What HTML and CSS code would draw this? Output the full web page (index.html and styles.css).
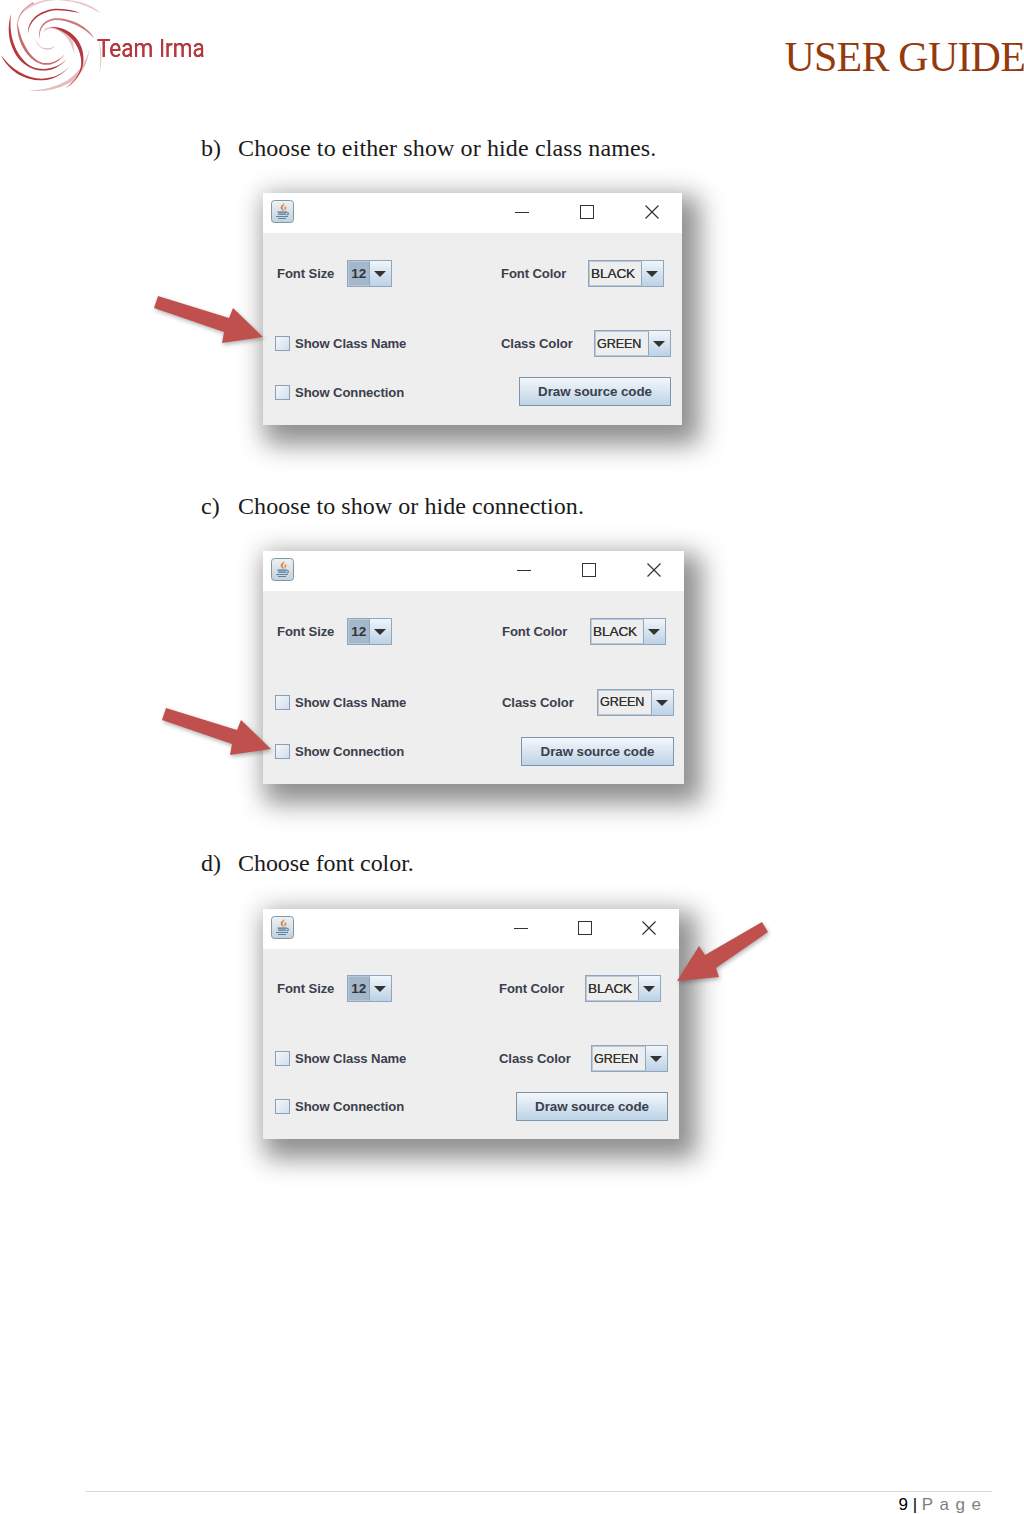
FILE: index.html
```html
<!DOCTYPE html>
<html lang="en">
<head>
<meta charset="utf-8">
<title>User Guide</title>
<link rel="stylesheet" href="styles.css">
</head>
<body>
<svg class="defs" width="0" height="0" aria-hidden="true">
  <defs>
    <linearGradient id="javabg" x1="0" y1="0" x2="0" y2="1"><stop offset="0" stop-color="#eef2f6"/><stop offset="1" stop-color="#c3d0db"/></linearGradient>
  </defs>
  <symbol id="java" viewBox="0 0 23 23">
    <rect x="0.500" y="0.500" width="22" height="22" rx="3" fill="url(#javabg)" stroke="#83979f"/>
    <path d="M12.800 3c1.600 2.300-2.300 3.400-1 5.800.4.900 1 1.300.8 2.200-2-1-3.800-2.800-2.400-5 .8-1.200 2.500-1.300 2.600-3z" fill="#e27a2c"/>
    <path d="M15 6c-1.500.8-2.300 1.700-1.500 3.300.2.500.2 1 0 1.500 1.500-1 2.500-3 1.500-4.800z" fill="#e98f4a"/>
    <path d="M6.500 12.200h9.500M7 14.200h8" fill="none" stroke="#4f7799" stroke-width="1.300"/>
    <path d="M16 12.500c2 0 2 2.200-.6 2.500M5 16.500h12M7 18.500h8" fill="none" stroke="#5d83a6" stroke-width="1.200"/>
  </symbol>
</svg>
<div class="page">
  <header class="top">
    <div class="brand">
      <svg class="swirl" viewBox="0 0 320 300" width="107" height="100" aria-hidden="true">
        <defs><filter id="soft"><feGaussianBlur stdDeviation="1"/></filter></defs>
        <g filter="url(#soft)" fill="#b5383c">
          <path d="M150 84C205 80 254 125 250 185 247 222 225 250 196 268 226 242 246 220 243 182 236 128 198 94 150 84z"/>
          <path d="M84 104C80 60 125 28 175 29 200 30 222 34 240 42 215 38 190 34 168 34 122 38 87 65 84 104z"/>
          <path d="M33 45C11 110 40 190 100 210 130 220 170 216 200 180 170 210 130 215 100 205 54 186 22 115 33 45z"/>
          <path d="M52 70C46 120 80 188 130 197 155 200 175 190 195 165 172 188 152 194 128 192 90 182 60 125 52 70z" opacity=".75"/>
          <path d="M120 122C110 95 124 66 155 59 200 52 262 78 282 118 252 85 205 63 165 63 134 66 114 90 120 122z" opacity=".65"/>
          <path d="M130 100C130 88 145 80 170 84 205 88 225 125 222 165 214 130 195 102 165 90 150 86 137 90 130 100z" opacity=".3"/>
          <path d="M2 168C25 215 70 246 130 244 165 242 195 222 218 190 192 226 160 238 125 239 80 239 35 212 2 168z"/>
          <path d="M78 272C115 278 160 266 200 245 235 222 258 190 268 150 262 198 240 238 200 256 160 276 115 280 78 272z" opacity=".35"/>
          <path d="M55 55C70 22 115 0 170 0 225 2 275 15 300 42 260 18 220 5 170 3 120 5 78 25 55 55z" opacity=".3"/>
          <path d="M100 14C75 22 55 50 50 85 49 60 62 28 100 8z" opacity=".5"/>
          <path d="M295 120C308 160 304 195 298 225 302 190 301 155 295 120z" opacity=".3"/>
          <path d="M125 145C140 150 155 148 165 140 155 154 135 156 125 145z" opacity=".35"/>
          <path d="M105 120C110 135 125 145 135 150 120 149 106 135 105 120z" opacity=".25"/>
        </g>
      </svg>
      <span class="brand-name">Team Irma</span>
    </div>
    <h1 class="doc-title">USER GUIDE</h1>
  </header>

  <main class="steps">
    <section class="step step-b">
      <h2 class="step-title"><span class="step-mark">b)</span>Choose to either show or hide class names.</h2>
      <div class="window win-b">
        <div class="titlebar">
          <svg class="java" width="23" height="23" aria-hidden="true"><use href="#java"/></svg>
          <div class="controls">
            <svg width="14" height="14" viewBox="0 0 14 14" aria-hidden="true"><path d="M0 7.500h14" stroke="#333" fill="none"/></svg>
            <svg width="14" height="14" viewBox="0 0 14 14" aria-hidden="true"><rect x=".5" y=".5" width="13" height="13" stroke="#333" fill="none"/></svg>
            <svg width="14" height="14" viewBox="0 0 14 14" aria-hidden="true"><path d="M.5.500l13 13M13.500.500l-13 13" stroke="#333" stroke-width="1.200" fill="none"/></svg>
          </div>
        </div>
        <div class="body">
          <div class="row row-one">
            <div class="left pad"><span class="label">Font Size</span><div class="combo combo-size"><span class="field selected">12</span><span class="drop"></span></div></div>
            <div class="right"><span class="label">Font Color</span><div class="combo combo-font"><span class="field">BLACK</span><span class="drop"></span></div></div>
          </div>
          <div class="row row-two">
            <div class="left"><span class="check"></span><span class="label">Show Class Name</span></div>
            <div class="right"><span class="label">Class Color</span><div class="combo combo-class"><span class="field">GREEN</span><span class="drop"></span></div></div>
          </div>
          <div class="row row-three">
            <div class="left"><span class="check"></span><span class="label">Show Connection</span></div>
            <div class="right end"><div class="button">Draw source code</div></div>
          </div>
        </div>
      </div>
    </section>

    <section class="step step-c">
      <h2 class="step-title"><span class="step-mark">c)</span>Choose to show or hide connection.</h2>
      <div class="window win-c">
        <div class="titlebar">
          <svg class="java" width="23" height="23" aria-hidden="true"><use href="#java"/></svg>
          <div class="controls">
            <svg width="14" height="14" viewBox="0 0 14 14" aria-hidden="true"><path d="M0 7.500h14" stroke="#333" fill="none"/></svg>
            <svg width="14" height="14" viewBox="0 0 14 14" aria-hidden="true"><rect x=".5" y=".5" width="13" height="13" stroke="#333" fill="none"/></svg>
            <svg width="14" height="14" viewBox="0 0 14 14" aria-hidden="true"><path d="M.5.500l13 13M13.500.500l-13 13" stroke="#333" stroke-width="1.200" fill="none"/></svg>
          </div>
        </div>
        <div class="body">
          <div class="row row-one">
            <div class="left pad"><span class="label">Font Size</span><div class="combo combo-size"><span class="field selected">12</span><span class="drop"></span></div></div>
            <div class="right"><span class="label">Font Color</span><div class="combo combo-font"><span class="field">BLACK</span><span class="drop"></span></div></div>
          </div>
          <div class="row row-two">
            <div class="left"><span class="check"></span><span class="label">Show Class Name</span></div>
            <div class="right"><span class="label">Class Color</span><div class="combo combo-class"><span class="field">GREEN</span><span class="drop"></span></div></div>
          </div>
          <div class="row row-three">
            <div class="left"><span class="check"></span><span class="label">Show Connection</span></div>
            <div class="right end"><div class="button">Draw source code</div></div>
          </div>
        </div>
      </div>
    </section>

    <section class="step step-d">
      <h2 class="step-title"><span class="step-mark">d)</span>Choose font color.</h2>
      <div class="window win-d">
        <div class="titlebar">
          <svg class="java" width="23" height="23" aria-hidden="true"><use href="#java"/></svg>
          <div class="controls">
            <svg width="14" height="14" viewBox="0 0 14 14" aria-hidden="true"><path d="M0 7.500h14" stroke="#333" fill="none"/></svg>
            <svg width="14" height="14" viewBox="0 0 14 14" aria-hidden="true"><rect x=".5" y=".5" width="13" height="13" stroke="#333" fill="none"/></svg>
            <svg width="14" height="14" viewBox="0 0 14 14" aria-hidden="true"><path d="M.5.500l13 13M13.500.500l-13 13" stroke="#333" stroke-width="1.200" fill="none"/></svg>
          </div>
        </div>
        <div class="body">
          <div class="row row-one">
            <div class="left pad"><span class="label">Font Size</span><div class="combo combo-size"><span class="field selected">12</span><span class="drop"></span></div></div>
            <div class="right"><span class="label">Font Color</span><div class="combo combo-font"><span class="field">BLACK</span><span class="drop"></span></div></div>
          </div>
          <div class="row row-two">
            <div class="left"><span class="check"></span><span class="label">Show Class Name</span></div>
            <div class="right"><span class="label">Class Color</span><div class="combo combo-class"><span class="field">GREEN</span><span class="drop"></span></div></div>
          </div>
          <div class="row row-three">
            <div class="left"><span class="check"></span><span class="label">Show Connection</span></div>
            <div class="right end"><div class="button">Draw source code</div></div>
          </div>
        </div>
      </div>
    </section>
  </main>

  <footer class="foot">
    <div class="page-no">9 | <span class="page-word">P a g e</span></div>
  </footer>

  <svg class="arrow arrow-b" width="120" height="60" viewBox="0 0 120 60" aria-hidden="true">
    <polygon points="5,1 76,23 80,13 110,42 69,48 71,37 1,13"/>
  </svg>
  <svg class="arrow arrow-c" width="120" height="60" viewBox="0 0 120 60" aria-hidden="true">
    <polygon points="5,1 76,23 80,13 110,42 69,48 71,37 1,13"/>
  </svg>
  <svg class="arrow arrow-d" width="100" height="70" viewBox="0 0 100 70" aria-hidden="true">
    <polygon points="86,2 92,12 40,48 43,57 1,61 23,26 29,35"/>
  </svg>
</div>
</body>
</html>
```
FILE: styles.css
```css
* { box-sizing: border-box; }
html, body { margin: 0; padding: 0; background: #fff; }
.defs { position: absolute; }
.page {
  position: relative;
  width: 1024px;
  height: 1514px;
  overflow: hidden;
  display: flex;
  flex-direction: column;
  font-family: "Liberation Serif", serif;
  color: #111;
}

/* Header */
.top { display: flex; justify-content: space-between; align-items: flex-start; height: 133px; flex: none; }
.brand { display: flex; align-items: flex-start; }
.swirl { display: block; flex: none; margin-top: -1px; }
.brand-name {
  font-family: Roboto, sans-serif;
  font-size: 26.5px;
  line-height: 30px;
  color: #b5383c;
  margin: 33px 0 0 -10px;
  transform: scaleX(.85);
  transform-origin: left center;
  white-space: nowrap;
  text-shadow: 0 0 .5px #b5383c;
}
.doc-title {
  margin: 32px -1px 0 0;
  font-family: "Liberation Serif", serif;
  font-weight: 400;
  font-size: 42px;
  letter-spacing: -.8px;
  line-height: 50px;
  color: #943a0c;
  white-space: nowrap;
}

/* Steps */
.steps { display: flex; flex-direction: column; }
.step { padding-left: 201px; }
.step-c { margin-top: 66px; }
.step-d { margin-top: 64px; }
.step-title {
  margin: 0;
  display: flex;
  font-weight: 400;
  font-size: 24px;
  letter-spacing: .12px;
  line-height: 30px;
  color: #1a1a1a;
}
.step-c .step-title { letter-spacing: .06px; }
.step-d .step-title { letter-spacing: -.05px; }
.step-mark { width: 37px; flex: none; }

/* Java window */
.window {
  margin-top: 30px;
  margin-left: 62px;
  display: flex;
  flex-direction: column;
  background: #eeeeee;
  box-shadow: 0 0 24px 8px rgba(0,0,0,.04), 10px 12px 24px 8px rgba(0,0,0,.42);
  font-family: "Liberation Sans", sans-serif;
}
.win-b { width: 419px; height: 232px; --right: 238px; --edge: 11px; --edge1: 18px; --pad: 27px; --g2: 43px; --g3: 20px; --ctl: 51px; --h2: 27px; --nudge: 1px; }
.win-c { width: 421px; height: 233px; --right: 239px; --edge: 10px; --edge1: 18px; --pad: 27px; --g2: 43px; --g3: 21px; --ctl: 51px; --h2: 28px; --nudge: 0px; }
.win-d { width: 416px; height: 230px; margin-top: 31px; --right: 236px; --edge: 11px; --edge1: 18px; --pad: 26px; --g2: 43px; --g3: 20px; --ctl: 50px; --h2: 27px; --nudge: 0px; }
.titlebar {
  height: 40px;
  flex: none;
  background: #fff;
  display: flex;
  align-items: center;
  justify-content: space-between;
  padding: 0 23px 3px 8px;
}
.java { display: block; }
.controls { display: flex; gap: var(--ctl); align-items: center; }
.controls svg { display: block; }
.body { display: flex; flex-direction: column; padding-top: var(--pad); }
.row { display: grid; grid-template-columns: var(--right) 1fr; align-items: center; }
.row-one { height: 27px; padding-right: var(--edge1); }
.row-two { height: var(--h2); margin-top: var(--g2); padding-right: var(--edge); }
.row-three { height: 29px; margin-top: var(--g3); padding-right: var(--edge); }
.left { display: flex; align-items: center; padding-left: 12px; }
.left.pad { padding-left: 14px; gap: 13px; }
.row-three .left { padding-top: var(--nudge); }
.right { display: flex; align-items: center; justify-content: space-between; }
.right.end { justify-content: flex-end; }
.label, .field, .button {
  font-size: 13.1px;
  font-weight: 700;
  color: #3b404c;
  white-space: nowrap;
  letter-spacing: -.1px;
}
.check {
  width: 15px;
  height: 15px;
  flex: none;
  margin-right: 5px;
  border: 1px solid #8d9fb1;
  background: linear-gradient(135deg, #f4f7fa, #cfdfee);
}
.combo { display: flex; height: 100%; min-height: 27px; flex: none; border: 1px solid #91a6ba; background: #eeeeee; }
.combo-size { width: 45px; }
.combo-font { width: 76px; }
.combo-class { width: 77px; }
.field {
  flex: 1;
  min-width: 0;
  display: flex;
  align-items: center;
  padding-left: 1px;
  font-weight: 400;
  font-size: 13.6px;
  color: #333;
  text-shadow: 0 0 .6px #333;
  border: 1px solid #b9c9d8;
  border-right-color: #91a6ba;
}
.combo-class .field { font-size: 12.6px; }
.field.selected {
  background: #a3b8cc;
  padding-left: 2px;
  font-weight: 700;
  font-size: 13.5px;
  text-shadow: none;
}
.drop {
  width: 21px;
  flex: none;
  position: relative;
  background: linear-gradient(#f0f5fa, #bcd2e6);
}
.drop::after {
  content: "";
  position: absolute;
  left: 4px;
  top: 10px;
  border-left: 6px solid transparent;
  border-right: 6px solid transparent;
  border-top: 6px solid #333;
}
.button {
  width: 152px;
  height: 29px;
  display: flex;
  align-items: center;
  justify-content: center;
  border: 1px solid #7d94ab;
  background: linear-gradient(#f3f7fb, #bdd3e7);
  font-size: 13.4px;
}
.win-c .button { width: 153px; }

/* Footer */
.foot { margin-top: auto; margin-left: 86px; width: 906px; height: 23px; flex: none; border-top: 1px solid #d9d9d9; }
.page-no {
  font-family: "Liberation Sans", sans-serif;
  font-size: 17px;
  line-height: 26px;
  color: #000;
  text-align: right;
  padding-right: 10px;
  white-space: nowrap;
}
.page-word { color: #7f7f7f; letter-spacing: .95px; }

/* Arrows lying over the page */
.arrow { position: absolute; overflow: visible; filter: drop-shadow(1px 2px 2px rgba(0,0,0,.3)); }
.arrow polygon { fill: #c0504d; }
.arrow-b { left: 153px; top: 295px; }
.arrow-c { left: 161px; top: 707px; }
.arrow-d { left: 676px; top: 920px; }
```
